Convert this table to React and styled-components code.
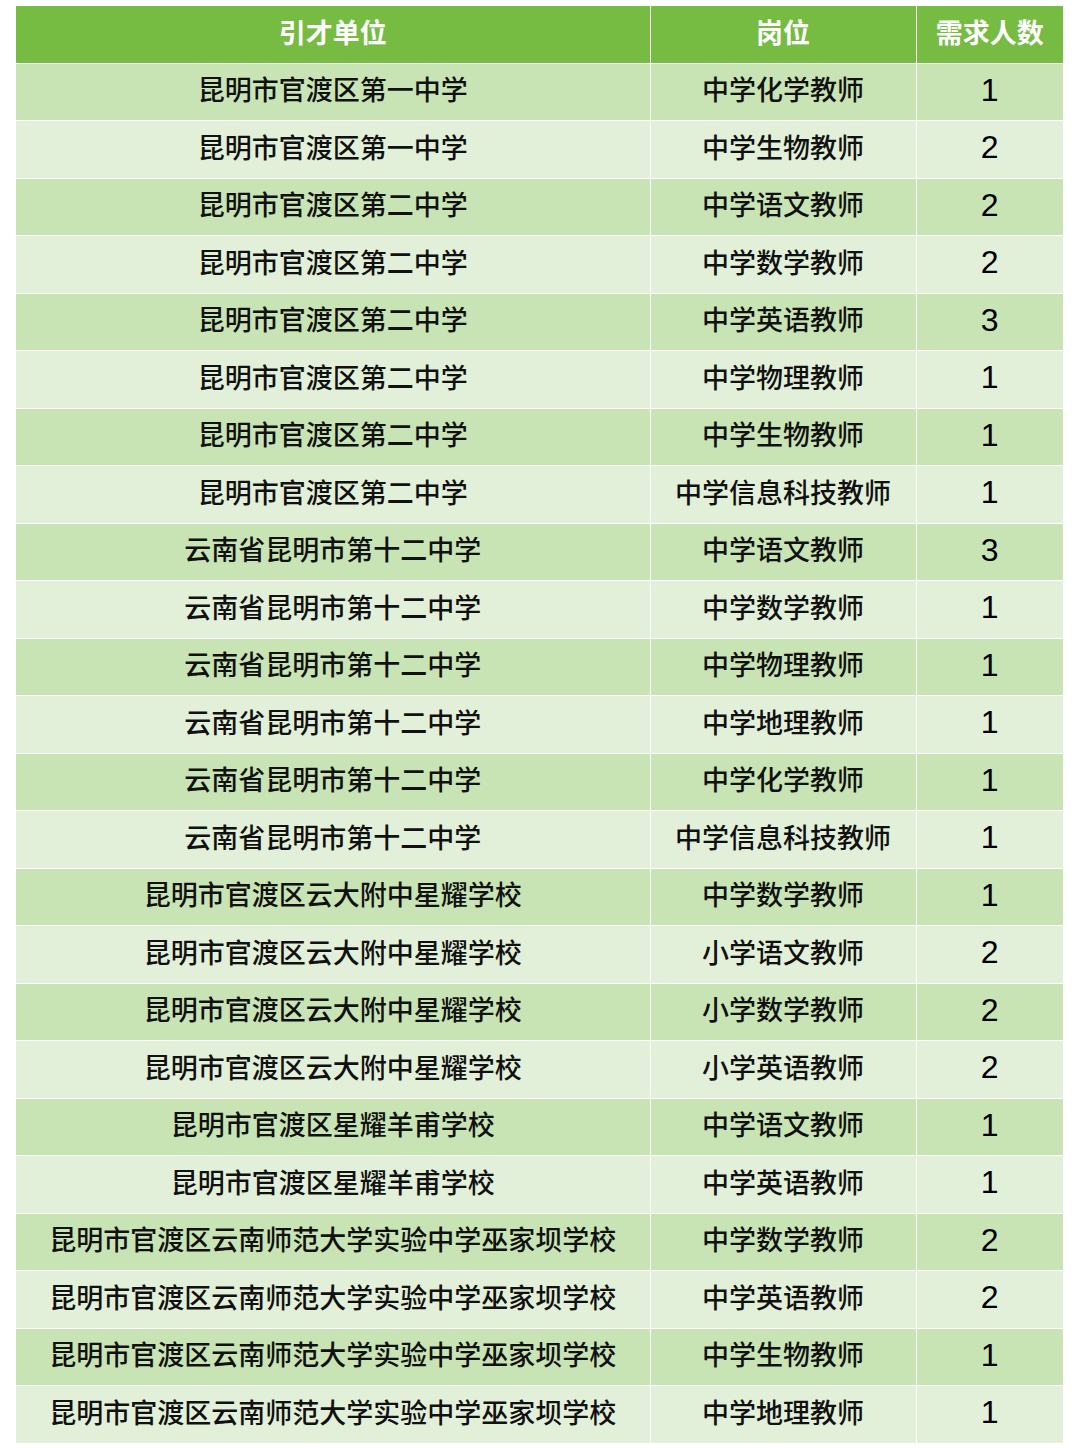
import React from "react";
import styled, { createGlobalStyle } from "styled-components";

const GlobalStyle = createGlobalStyle`
  html, body {
    margin: 0;
    padding: 0;
    background: #ffffff;
  }
`;

const Page = styled.div`
  width: 1080px;
  padding: 5px 17px 0 16px;
  box-sizing: border-box;
  font-family: "Liberation Sans", "Noto Sans CJK SC", sans-serif;
`;

const Table = styled.table`
  width: 1047px;
  border-collapse: collapse;
  table-layout: fixed;
`;

const Row = styled.tr`
  height: 57.5px;
  background: ${(p) => (p.$head ? "#76bc43" : p.$odd ? "#c8e4b5" : "#e3f0d9")};
`;

const Cell = styled.td`
  border: 1.5px solid #ffffff;
  padding: 0;
  text-align: center;
  vertical-align: middle;
  font-size: 27px;
  font-weight: ${(p) => (p.$head ? 700 : 500)};
  color: ${(p) => (p.$head ? "#ffffff" : "#111111")};
  white-space: nowrap;
  line-height: 1;

  &:first-child {
    border-left: none;
  }
  &:last-child {
    border-right: none;
  }
`;

const Count = styled(Cell)`
  font-size: 32px;
  font-weight: 400;
  color: #000000;
  padding-bottom: 4px;
`;

const rows = [
  ["昆明市官渡区第一中学", "中学化学教师", 1],
  ["昆明市官渡区第一中学", "中学生物教师", 2],
  ["昆明市官渡区第二中学", "中学语文教师", 2],
  ["昆明市官渡区第二中学", "中学数学教师", 2],
  ["昆明市官渡区第二中学", "中学英语教师", 3],
  ["昆明市官渡区第二中学", "中学物理教师", 1],
  ["昆明市官渡区第二中学", "中学生物教师", 1],
  ["昆明市官渡区第二中学", "中学信息科技教师", 1],
  ["云南省昆明市第十二中学", "中学语文教师", 3],
  ["云南省昆明市第十二中学", "中学数学教师", 1],
  ["云南省昆明市第十二中学", "中学物理教师", 1],
  ["云南省昆明市第十二中学", "中学地理教师", 1],
  ["云南省昆明市第十二中学", "中学化学教师", 1],
  ["云南省昆明市第十二中学", "中学信息科技教师", 1],
  ["昆明市官渡区云大附中星耀学校", "中学数学教师", 1],
  ["昆明市官渡区云大附中星耀学校", "小学语文教师", 2],
  ["昆明市官渡区云大附中星耀学校", "小学数学教师", 2],
  ["昆明市官渡区云大附中星耀学校", "小学英语教师", 2],
  ["昆明市官渡区星耀羊甫学校", "中学语文教师", 1],
  ["昆明市官渡区星耀羊甫学校", "中学英语教师", 1],
  ["昆明市官渡区云南师范大学实验中学巫家坝学校", "中学数学教师", 2],
  ["昆明市官渡区云南师范大学实验中学巫家坝学校", "中学英语教师", 2],
  ["昆明市官渡区云南师范大学实验中学巫家坝学校", "中学生物教师", 1],
  ["昆明市官渡区云南师范大学实验中学巫家坝学校", "中学地理教师", 1],
];

export default function App() {
  return (
    <>
      <GlobalStyle />
      <Page>
        <Table>
          <colgroup>
            <col style={{ width: 634 }} />
            <col style={{ width: 266 }} />
            <col style={{ width: 147 }} />
          </colgroup>
          <thead>
            <Row $head>
              <Cell as="th" $head>引才单位</Cell>
              <Cell as="th" $head>岗位</Cell>
              <Cell as="th" $head>需求人数</Cell>
            </Row>
          </thead>
          <tbody>
            {rows.map(([unit, post, count], i) => (
              <Row key={i} $odd={i % 2 === 0}>
                <Cell>{unit}</Cell>
                <Cell>{post}</Cell>
                <Count>{count}</Count>
              </Row>
            ))}
          </tbody>
        </Table>
      </Page>
    </>
  );
}
